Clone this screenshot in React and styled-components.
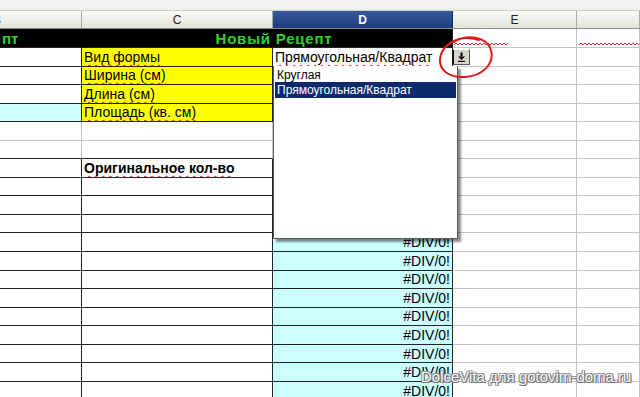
import React from "react";
import styled, { createGlobalStyle } from "styled-components";

const Global = createGlobalStyle`
  html, body { margin: 0; padding: 0; background: #fff; }
  body { width: 640px; height: 397px; overflow: hidden; font-family: "Liberation Sans", Arial, sans-serif; }
`;

const DARK = "#222";
const LIGHT = "#c4c4c4";
const COLS = "82px 191px 180px 124px 1fr";

const Page = styled.div`
  position: relative;
  width: 640px;
  height: 397px;
  overflow: hidden;
  background: #fff;
`;

const TopStrip = styled.div`
  height: 10px;
  background: #f1f1ef;
  border-bottom: 1px solid #cfcfcf;
`;

const HeaderRow = styled.div`
  display: grid;
  grid-template-columns: ${COLS};
  height: 17px;
  border-bottom: 1px solid #8e8e8e;
`;

const HeaderCell = styled.div`
  box-sizing: border-box;
  display: flex;
  align-items: center;
  justify-content: ${(p) => (p.$cut ? "flex-start" : "center")};
  overflow: hidden;
  font-size: 12px;
  color: ${(p) => (p.$active ? "#fff" : "#222")};
  font-weight: ${(p) => (p.$active ? "bold" : "normal")};
  background: ${(p) =>
    p.$active
      ? "linear-gradient(#3a5aa0, #1c3a7c)"
      : "linear-gradient(#fafaf7, #e4e3dc)"};
  border-right: 1px solid ${(p) => (p.$active ? "#14295a" : "#a9a9a4")};
`;

const CutLetter = styled.span`
  margin-left: -7px;
`;

const Sheet = styled.div`
  position: relative;
  display: grid;
  grid-template-columns: ${COLS};
  grid-template-rows: 19px repeat(19, 18.55px);
`;

const Cell = styled.div`
  box-sizing: border-box;
  grid-column: ${(p) => (p.$span ? `span ${p.$span}` : "auto")};
  display: flex;
  align-items: center;
  justify-content: ${(p) =>
    p.$align === "right" ? "flex-end" : p.$align === "center" ? "center" : "flex-start"};
  padding: ${(p) => (p.$align === "center" ? "0 0 0 14px" : "0 2px")};
  overflow: hidden;
  white-space: nowrap;
  background: ${(p) => p.$bg || "#fff"};
  border-right: 1px solid ${(p) => p.$r || LIGHT};
  border-bottom: 1px solid ${(p) => p.$b || LIGHT};
  font-size: 14px;
  color: #000;
  position: relative;
`;

const Label = styled.span`
  font-weight: ${(p) => (p.$bold ? "bold" : "normal")};
  color: ${(p) => p.$color || "#000"};
  font-size: ${(p) => p.$size || 14}px;
  letter-spacing: ${(p) => p.$spacing || 0}px;
  text-decoration: ${(p) => (p.$wavy ? "underline wavy #d8262a" : "none")};
  text-decoration-thickness: 1px;
  text-underline-offset: 2px;
  text-decoration-skip-ink: none;
`;

const Squiggle = styled.svg`
  position: absolute;
  left: ${(p) => p.$left || 2}px;
  bottom: 1px;
`;

const Dropdown = styled.div`
  position: absolute;
  left: 273px;
  top: 37px;
  width: 185px;
  height: 173px;
  box-sizing: border-box;
  background: #fff;
  border: 1px solid #5a5a5a;
  border-top: none;
  box-shadow: 3px 3px 2px rgba(0, 0, 0, 0.45);
  padding: 1px 1px;
  display: flex;
  flex-direction: column;
`;

const Option = styled.div`
  height: ${(p) => (p.$selected ? 16 : 15)}px;
  display: flex;
  align-items: center;
  padding-left: 2px;
  font-size: 12px;
  color: ${(p) => (p.$selected ? "#fff" : "#000")};
  background: ${(p) => (p.$selected ? "#0c2a6c" : "#fff")};
`;

const ComboButton = styled.div`
  position: absolute;
  left: 452px;
  top: 20px;
  width: 18px;
  height: 16px;
  box-sizing: border-box;
  background: #d6d3cb;
  border-left: 2px solid #111;
  border-top: 1px solid #fff;
  border-right: 1px solid #555;
  border-bottom: 1px solid #555;
  display: flex;
  align-items: center;
  justify-content: center;
`;

const Circle = styled.svg`
  position: absolute;
  left: 430px;
  top: 30px;
`;

const Watermark = styled.div`
  position: absolute;
  left: 421px;
  top: 368px;
  font-size: 15px;
  color: #f4f4f4;
  white-space: nowrap;
  text-shadow: 1px 1px 0 #6a6a6a, -1px -1px 0 #9a9a9a, 1px -1px 0 #8a8a8a,
    -1px 1px 0 #8a8a8a;
`;

const wave = (w) => {
  let d = "M0 2";
  for (let x = 0; x < w; x += 4) d += ` L${x + 2} 0 L${x + 4} 2`;
  return d;
};

const Wave = ({ width, left }) => (
  <Squiggle $left={left} width={width} height="3" viewBox={`0 0 ${width} 3`}>
    <path d={wave(width)} fill="none" stroke="#d8262a" strokeWidth="1" />
  </Squiggle>
);

const GREEN = "#2fd02f";

const yellowRows = ["Вид формы", "Ширина (см)", "Длина (см)", "Площадь (кв. см)"];

export default function App() {
  const rows = [];
  yellowRows.forEach((t, i) => {
    rows.push(
      <Cell key={`b${i}`} $bg={i === 3 ? "#ccffff" : "#fff"} $r={DARK} $b={DARK} />,
      <Cell key={`c${i}`} $bg="#ffff00" $r={DARK} $b={DARK}>
        <Label $wavy>{t}</Label>
      </Cell>,
      i === 0 ? (
        <Cell key={`d${i}`} $r={DARK} $b={DARK}>
          <Label $wavy>Прямоугольная/Квадрат</Label>
        </Cell>
      ) : (
        <Cell key={`d${i}`} $r={LIGHT} />
      ),
      <Cell key={`e${i}`} />,
      <Cell key={`f${i}`} />
    );
  });
  [0, 1].forEach((i) => {
    rows.push(
      <Cell key={`eb${i}`} $b={i === 1 ? DARK : LIGHT} />,
      <Cell key={`ec${i}`} $b={i === 1 ? DARK : LIGHT} />,
      <Cell key={`ed${i}`} />,
      <Cell key={`ee${i}`} />,
      <Cell key={`ef${i}`} />
    );
  });
  for (let i = 0; i < 13; i++) {
    rows.push(
      <Cell key={`tb${i}`} $r={DARK} $b={DARK} />,
      <Cell key={`tc${i}`} $r={DARK} $b={DARK}>
        {i === 0 && (
          <Label $bold $wavy>
            Оригинальное кол-во
          </Label>
        )}
      </Cell>,
      <Cell key={`td${i}`} $bg="#ccffff" $r={DARK} $b={DARK} $align="right">
        <Label>#DIV/0!</Label>
      </Cell>,
      <Cell key={`te${i}`} />,
      <Cell key={`tf${i}`} />
    );
  }

  return (
    <Page>
      <Global />
      <TopStrip />
      <HeaderRow>
        <HeaderCell $cut>
          <CutLetter>B</CutLetter>
        </HeaderCell>
        <HeaderCell>C</HeaderCell>
        <HeaderCell $active>D</HeaderCell>
        <HeaderCell>E</HeaderCell>
        <HeaderCell />
      </HeaderRow>
      <Sheet>
        <Cell $bg="#000" $r="#000" $b={DARK}>
          <Label $bold $color={GREEN} $size={15} $wavy>
            пт
          </Label>
        </Cell>
        <Cell $span={2} $bg="#000" $r={DARK} $b={DARK} $align="center">
          <Label $bold $color={GREEN} $size={15} $spacing={0.8}>
            Новый Рецепт
          </Label>
        </Cell>
        <Cell>
          <Wave width={54} left={1} />
        </Cell>
        <Cell>
          <Wave width={64} left={2} />
        </Cell>
        {rows}
        <Dropdown>
          <Option>Круглая</Option>
          <Option $selected>Прямоугольная/Квадрат</Option>
        </Dropdown>
        <ComboButton>
          <svg width="9" height="10" viewBox="0 0 9 10">
            <rect x="3.5" y="0.5" width="2" height="4" fill="#000" />
            <path d="M1 4.5 L8 4.5 L4.5 8 Z" fill="#000" />
            <rect x="1" y="8.8" width="7" height="1.2" fill="#000" />
          </svg>
        </ComboButton>
      </Sheet>
      <Circle width="70" height="55" viewBox="0 0 70 55">
        <path
          d="M24 12 C36 4, 57 6, 61 20 C65 34, 52 46, 35 47 C19 48, 9 40, 10 29 C11 20, 17 13, 29 9 C36 7, 43 8, 49 10"
          fill="none"
          stroke="#e01818"
          strokeWidth="2"
          strokeLinecap="round"
        />
      </Circle>
      <Watermark>DolceVita для gotovim-doma.ru</Watermark>
    </Page>
  );
}
